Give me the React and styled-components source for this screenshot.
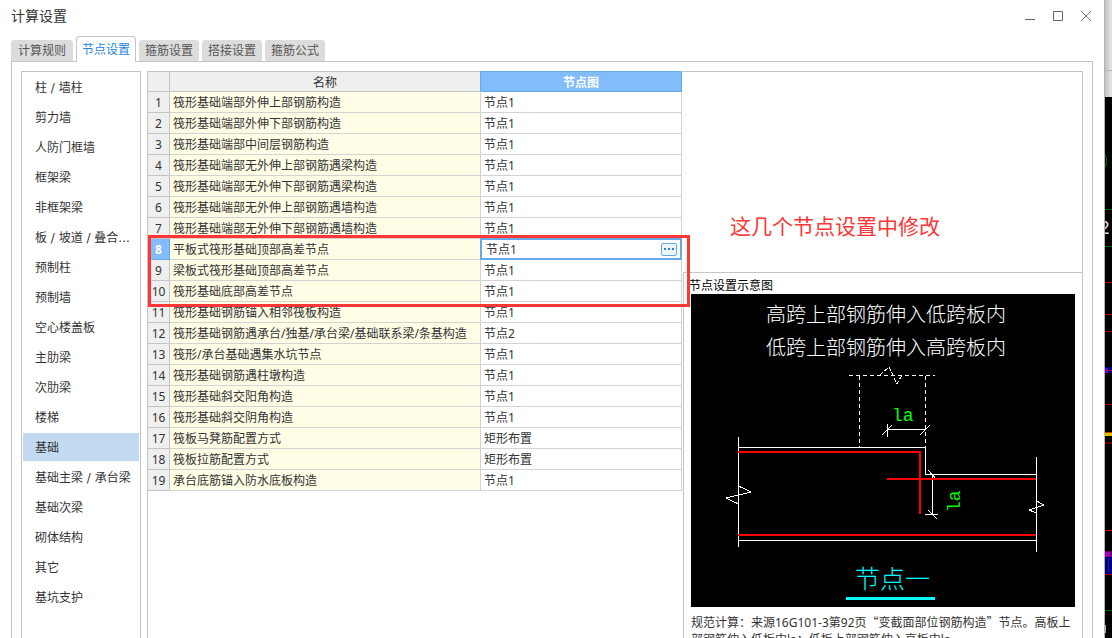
import React, { useState } from 'react';
import styled, { createGlobalStyle, css } from 'styled-components';

const Line = '#c2c4c8';
const GridLine = '#d3d3d3';
const Ink = '#333333';
const Blue = '#2483e2';
const HeadBlue = '#82bcfb';
const EdgeBlue = '#66a8e8';
const Red = '#fd3636';
const Sans = "'Noto Sans', 'Noto Sans CJK SC', sans-serif";

const GlobalStyle = createGlobalStyle`
  * {
    box-sizing: border-box;
  }
  body {
    margin: 0;
    overflow: hidden;
    color: ${Ink};
    font-family: ${Sans};
    font-size: 12px;
  }
  button, input {
    font: inherit;
    color: inherit;
  }
`

const Screen = styled.div`
  display: flex;
  height: 100vh;
  overflow: hidden;
`

const Dialog = styled.main`
  display: flex;
  flex: 1;
  flex-direction: column;
  min-width: 0;
  border-right: 1px solid #b4b4b4;
  background: #fff;
`

const TitleBar = styled.header`
  display: flex;
  justify-content: space-between;
  height: 31px;
  padding: 0 13px 0 11px;
`

const DialogTitle = styled.h1`
  margin: 0;
  font-size: 14px;
  font-weight: normal;
  line-height: 32px;
`

const WindowButtons = styled.div`
  display: flex;
  align-items: center;
  gap: 18px;
`

const WindowButton = styled.button`
  display: flex;
  padding: 0;
  border: 0;
  background: none;
`

const Tabs = styled.nav`
  display: flex;
  align-items: flex-end;
  gap: 3px;
  height: 30px;
  padding: 0 11px;
`

const Tab = styled.button`
  height: 21px;
  padding: 0 6px;
  border: 0;
  border-radius: 3px 3px 0 0;
  background: #dcdcdc;
  color: #555;
  line-height: 20px;

  &:first-child {
    padding: 0 7px;
  }

  ${props => props.$active && css`
    position: relative;
    height: 26px;
    margin-bottom: -1px;
    padding: 0 5px;
    border: 1px solid ${Line};
    border-bottom: 0;
    border-radius: 4px 4px 0 0;
    background: #fff;
    color: ${Blue};
    line-height: 24px;
  `}
`

const Panel = styled.section`
  display: flex;
  flex: 1;
  gap: 6px;
  min-height: 0;
  margin: 0 11px;
  padding: 9px 9px 0;
  border: 1px solid ${Line};
  border-bottom: 0;
`

const Sidebar = styled.nav`
  display: flex;
  flex: none;
  flex-direction: column;
  gap: 2px;
  width: 120px;
  padding: 1px;
  border: 1px solid ${Line};
  border-bottom: 0;
  font-family: 'DejaVu Sans', 'Noto Sans CJK SC', sans-serif;
`

const SideItem = styled.button`
  flex: none;
  height: 28px;
  padding: 2px 0 0 12px;
  border: 0;
  background: ${props => (props.$active ? '#c2d9f0' : 'none')};
  line-height: 26px;
  text-align: left;
  white-space: nowrap;
`

const Content = styled.div`
  display: flex;
  flex: 1;
  min-width: 0;
  border: 1px solid ${Line};
  border-bottom: 0;
`

const TableArea = styled.div`
  position: relative;
  flex: none;
`

const Table = styled.table`
  width: 534px;
  border-collapse: separate;
  border-spacing: 0;
  table-layout: fixed;
`

const HeadCell = styled.th`
  width: ${props => props.$width};
  height: 20px;
  padding: 2px 0 0;
  border-right: 1px solid ${Line};
  border-bottom: 1px solid ${Line};
  background: #efefef;
  font-weight: normal;
  line-height: 17px;

  ${props => props.$active && css`
    border-color: ${EdgeBlue};
    background: ${HeadBlue};
    box-shadow: -1px -1px 0 ${EdgeBlue};
    color: #fff;
    font-weight: bold;
  `}
`

const NumberCell = styled.th`
  height: 21px;
  padding: 2px 0 0;
  border-right: 1px solid ${Line};
  border-bottom: 1px solid ${Line};
  background: #efefef;
  font-weight: normal;
  line-height: 18px;

  ${props => props.$active && css`
    border-color: ${EdgeBlue};
    background: ${HeadBlue};
    color: #fff;
    font-weight: bold;
  `}
`

const Cell = styled.td`
  position: relative;
  height: 21px;
  padding: 2px 3px 0;
  border-right: 1px solid ${GridLine};
  border-bottom: 1px solid ${GridLine};
  background: ${props => (props.$name ? '#fffde6' : '#fff')};
  line-height: 18px;
  white-space: nowrap;
`

/* sits over the cell's own grid lines */
const Editor = styled.div`
  position: absolute;
  inset: -1px;
  display: flex;
  align-items: center;
  padding: 0 3px;
  border: 2px solid ${EdgeBlue};
  background: #fff;
`

const EditorInput = styled.input`
  flex: 1;
  min-width: 0;
  height: 18px;
  padding: 2px 0 0 1px;
  border: 0;
  outline: 0;
  background: none;
`

const MoreButton = styled.button`
  display: flex;
  align-items: center;
  justify-content: center;
  width: 16px;
  height: 13px;
  padding: 0;
  border: 1px solid ${EdgeBlue};
  border-radius: 2px;
  background: #eef5fd;
`

const Highlight = styled.div`
  position: absolute;
  top: 163px;
  left: 0;
  z-index: 1;
  width: 542px;
  height: 72px;
  border: 3px solid ${Red};
  pointer-events: none;
`

const Side = styled.div`
  display: flex;
  flex: 1;
  flex-direction: column;
  min-width: 0;
`

const Note = styled.p`
  display: flex;
  flex: none;
  align-items: flex-end;
  height: 200px;
  margin: 0;
  padding: 0 0 34px 48px;
  color: ${Red};
  font-size: 21px;
  line-height: 24px;
  white-space: nowrap;
`

const Preview = styled.section`
  flex: 1;
  margin-left: 1px;
  padding: 0 7px;
  border-top: 1px solid ${Line};
  border-left: 1px solid ${Line};
`

const PreviewTitle = styled.h2`
  margin: 0 -2px;
  padding-top: 5px;
  color: #000;
  font-size: 12px;
  font-weight: normal;
  line-height: 16px;
`

const Drawing = styled.svg`
  display: block;
  width: 384px;
  height: 313px;
  background: #000;
  font-family: ${Sans};
`

const Caption = styled.p`
  margin: 0;
  padding-top: 6px;
  line-height: 17px;
`

/* full-width quotation marks */
const Quote = styled.span`
  font-family: 'Noto Sans CJK SC', sans-serif;
`

const Backdrop = styled.aside`
  flex: none;
  width: 7px;
  height: 100vh;
  background: #000;
`

const tabs = ['计算规则', '节点设置', '箍筋设置', '搭接设置', '箍筋公式'];

const members = [
  '柱 / 墙柱', '剪力墙', '人防门框墙', '框架梁', '非框架梁', '板 / 坡道 / 叠合...',
  '预制柱', '预制墙', '空心楼盖板', '主肋梁', '次肋梁', '楼梯', '基础',
  '基础主梁 / 承台梁', '基础次梁', '砌体结构', '其它', '基坑支护',
];

const rows = [
  ['筏形基础端部外伸上部钢筋构造', '节点1'],
  ['筏形基础端部外伸下部钢筋构造', '节点1'],
  ['筏形基础端部中间层钢筋构造', '节点1'],
  ['筏形基础端部无外伸上部钢筋遇梁构造', '节点1'],
  ['筏形基础端部无外伸下部钢筋遇梁构造', '节点1'],
  ['筏形基础端部无外伸上部钢筋遇墙构造', '节点1'],
  ['筏形基础端部无外伸下部钢筋遇墙构造', '节点1'],
  ['平板式筏形基础顶部高差节点', '节点1'],
  ['梁板式筏形基础顶部高差节点', '节点1'],
  ['筏形基础底部高差节点', '节点1'],
  ['筏形基础钢筋锚入相邻筏板构造', '节点1'],
  ['筏形基础钢筋遇承台/独基/承台梁/基础联系梁/条基构造', '节点2'],
  ['筏形/承台基础遇集水坑节点', '节点1'],
  ['筏形基础钢筋遇柱墩构造', '节点1'],
  ['筏形基础斜交阳角构造', '节点1'],
  ['筏形基础斜交阴角构造', '节点1'],
  ['筏板马凳筋配置方式', '矩形布置'],
  ['筏板拉筋配置方式', '矩形布置'],
  ['承台底筋锚入防水底板构造', '节点1'],
];

const SlabDrawing = () => (
  <Drawing viewBox="0 0 384 313" role="img" aria-label="节点一">
    <g fill="#fff" fontSize="20" fontWeight="300">
      <text x="75" y="28">高跨上部钢筋伸入低跨板内</text>
      <text x="75" y="61">低跨上部钢筋伸入高跨板内</text>
    </g>
    <g fill="none" stroke="#fff" shapeRendering="crispEdges">
      {/* column above the step */}
      <path strokeDasharray="4 3" d="M158 81.5H244M168.5 82V153M234.5 82V153" />
      <path strokeDasharray="4 2" d="M189 81L198 73L206 90L211 81" />
      {/* slab outline */}
      <path d="M47.5 143V253M345.5 163V258M47 153.5H234.5V180.5H345M47 246.5H345" />
      <path d="M47.5 192L60 198L35 204L47.5 210M345.5 207L353 211L338 216L345.5 219" />
      {/* anchorage dimensions */}
      <path d="M196 135.5H234M196.5 130V143M191 141L201 131M229 141L239 131" />
      <path d="M241.5 180V220M234 220.5H247M237 176L246 186M237 216L246 225" />
    </g>
    <path
      d="M47 158H229V220M196 185H345M47 241H345"
      fill="none"
      stroke="#f00"
      strokeWidth="2"
      shapeRendering="crispEdges"
    />
    <g fill="#0f0" fontSize="18" fontFamily="'Liberation Mono', monospace">
      <text x="201" y="127">la</text>
      <text transform="translate(269 218) rotate(-90)">la</text>
    </g>
    <text x="164" y="294" fill="#0ff" fontSize="25" fontWeight="300">节点一</text>
    <rect x="155" y="303" width="89" height="3" fill="#0ff" />
  </Drawing>
)

/* the model view still showing behind the dialog */
const ModelView = () => (
  <svg width="7" height="638" shapeRendering="crispEdges" aria-hidden="true">
    <defs>
      <linearGradient id="shade">
        <stop offset="0" stopColor="#c4c4c4" />
        <stop offset="1" stopColor="#e6e6e6" />
      </linearGradient>
    </defs>
    <rect width="7" height="97" fill="url(#shade)" />
    <rect y="70" width="7" height="1" fill="#b8b8b8" />
    <path d="M0 155Q4 161 0 167" fill="none" stroke="#006400" />
    <path d="M0 209.5H7M0 246.5H7M0 610.5H7" stroke="#006400" />
    <text x="-6" y="234" fill="#ddd" fontSize="19" fontFamily="Liberation Sans, sans-serif">2</text>
    <path d="M0 282.5H7M0 314.5H7M0 331.5H7M0 404.5H7M0 574.5H7" stroke="#c00000" />
    <path d="M0 530.5H7" stroke="#f00000" />
    <rect y="367" width="7" height="6" fill="#000078" />
    <rect y="368" width="3" height="5" fill="#6a00c8" />
    <path d="M2 370.5H7" stroke="#c00030" />
    <rect y="432" width="7" height="1" fill="#c04000" />
    <rect y="433" width="7" height="3" fill="#d8c800" />
    <rect y="442" width="7" height="2" fill="#600000" />
    <rect y="551" width="7" height="6" fill="#600060" />
    <rect y="552" width="5" height="5" fill="#a000c0" />
    <rect y="557" width="7" height="17" fill="#000078" />
    <path d="M3.5 558V572" stroke="#2020b0" />
    <rect y="625" width="1" height="8" fill="#aaa" />
  </svg>
)

export default function App() {
  const [tab, setTab] = useState('节点设置');
  const [member, setMember] = useState('基础');
  const [value, setValue] = useState('节点1');

  return (
    <Screen>
      <GlobalStyle />
      <Dialog>
        <TitleBar>
          <DialogTitle>计算设置</DialogTitle>
          <WindowButtons>
            <WindowButton aria-label="最小化">
              <svg width="10" height="10" stroke="#666"><path d="M0 8.5H10" /></svg>
            </WindowButton>
            <WindowButton aria-label="最大化">
              <svg width="10" height="10" fill="none" stroke="#666"><path d="M.5 .5H9.5V9.5H.5Z" /></svg>
            </WindowButton>
            <WindowButton aria-label="关闭">
              <svg width="10" height="10" stroke="#777"><path d="M0 0L10 10M10 0L0 10" /></svg>
            </WindowButton>
          </WindowButtons>
        </TitleBar>
        <Tabs>
          {tabs.map(name => (
            <Tab key={name} $active={name === tab} onClick={() => setTab(name)}>{name}</Tab>
          ))}
        </Tabs>
        <Panel>
          <Sidebar>
            {members.map(name => (
              <SideItem key={name} $active={name === member} onClick={() => setMember(name)}>
                {name}
              </SideItem>
            ))}
          </Sidebar>
          <Content>
            <TableArea>
              <Table>
                <thead>
                  <tr>
                    <HeadCell $width="22px" />
                    <HeadCell $width="311px">名称</HeadCell>
                    <HeadCell $width="201px" $active>节点图</HeadCell>
                  </tr>
                </thead>
                <tbody>
                  {rows.map(([name, node], i) => (
                    <tr key={name}>
                      <NumberCell scope="row" $active={i === 7}>{i + 1}</NumberCell>
                      <Cell $name>{name}</Cell>
                      <Cell>
                        {i === 7 ? (
                          <Editor>
                            <EditorInput
                              aria-label={name}
                              value={value}
                              onChange={e => setValue(e.target.value)}
                            />
                            <MoreButton aria-label="更多">
                              <svg width="10" height="2" fill={Blue}>
                                <path d="M0 0H2V2H0ZM4 0H6V2H4ZM8 0H10V2H8Z" />
                              </svg>
                            </MoreButton>
                          </Editor>
                        ) : node}
                      </Cell>
                    </tr>
                  ))}
                </tbody>
              </Table>
              <Highlight />
            </TableArea>
            <Side>
              <Note>这几个节点设置中修改</Note>
              <Preview>
                <PreviewTitle>节点设置示意图</PreviewTitle>
                <SlabDrawing />
                <Caption>
                  规范计算：来源16G101-3第92页<Quote>“变截面部位钢筋构造”</Quote>节点。高板上部钢筋伸入低板中la；低板上部钢筋伸入高板中la
                </Caption>
              </Preview>
            </Side>
          </Content>
        </Panel>
      </Dialog>
      <Backdrop>
        <ModelView />
      </Backdrop>
    </Screen>
  )
}
